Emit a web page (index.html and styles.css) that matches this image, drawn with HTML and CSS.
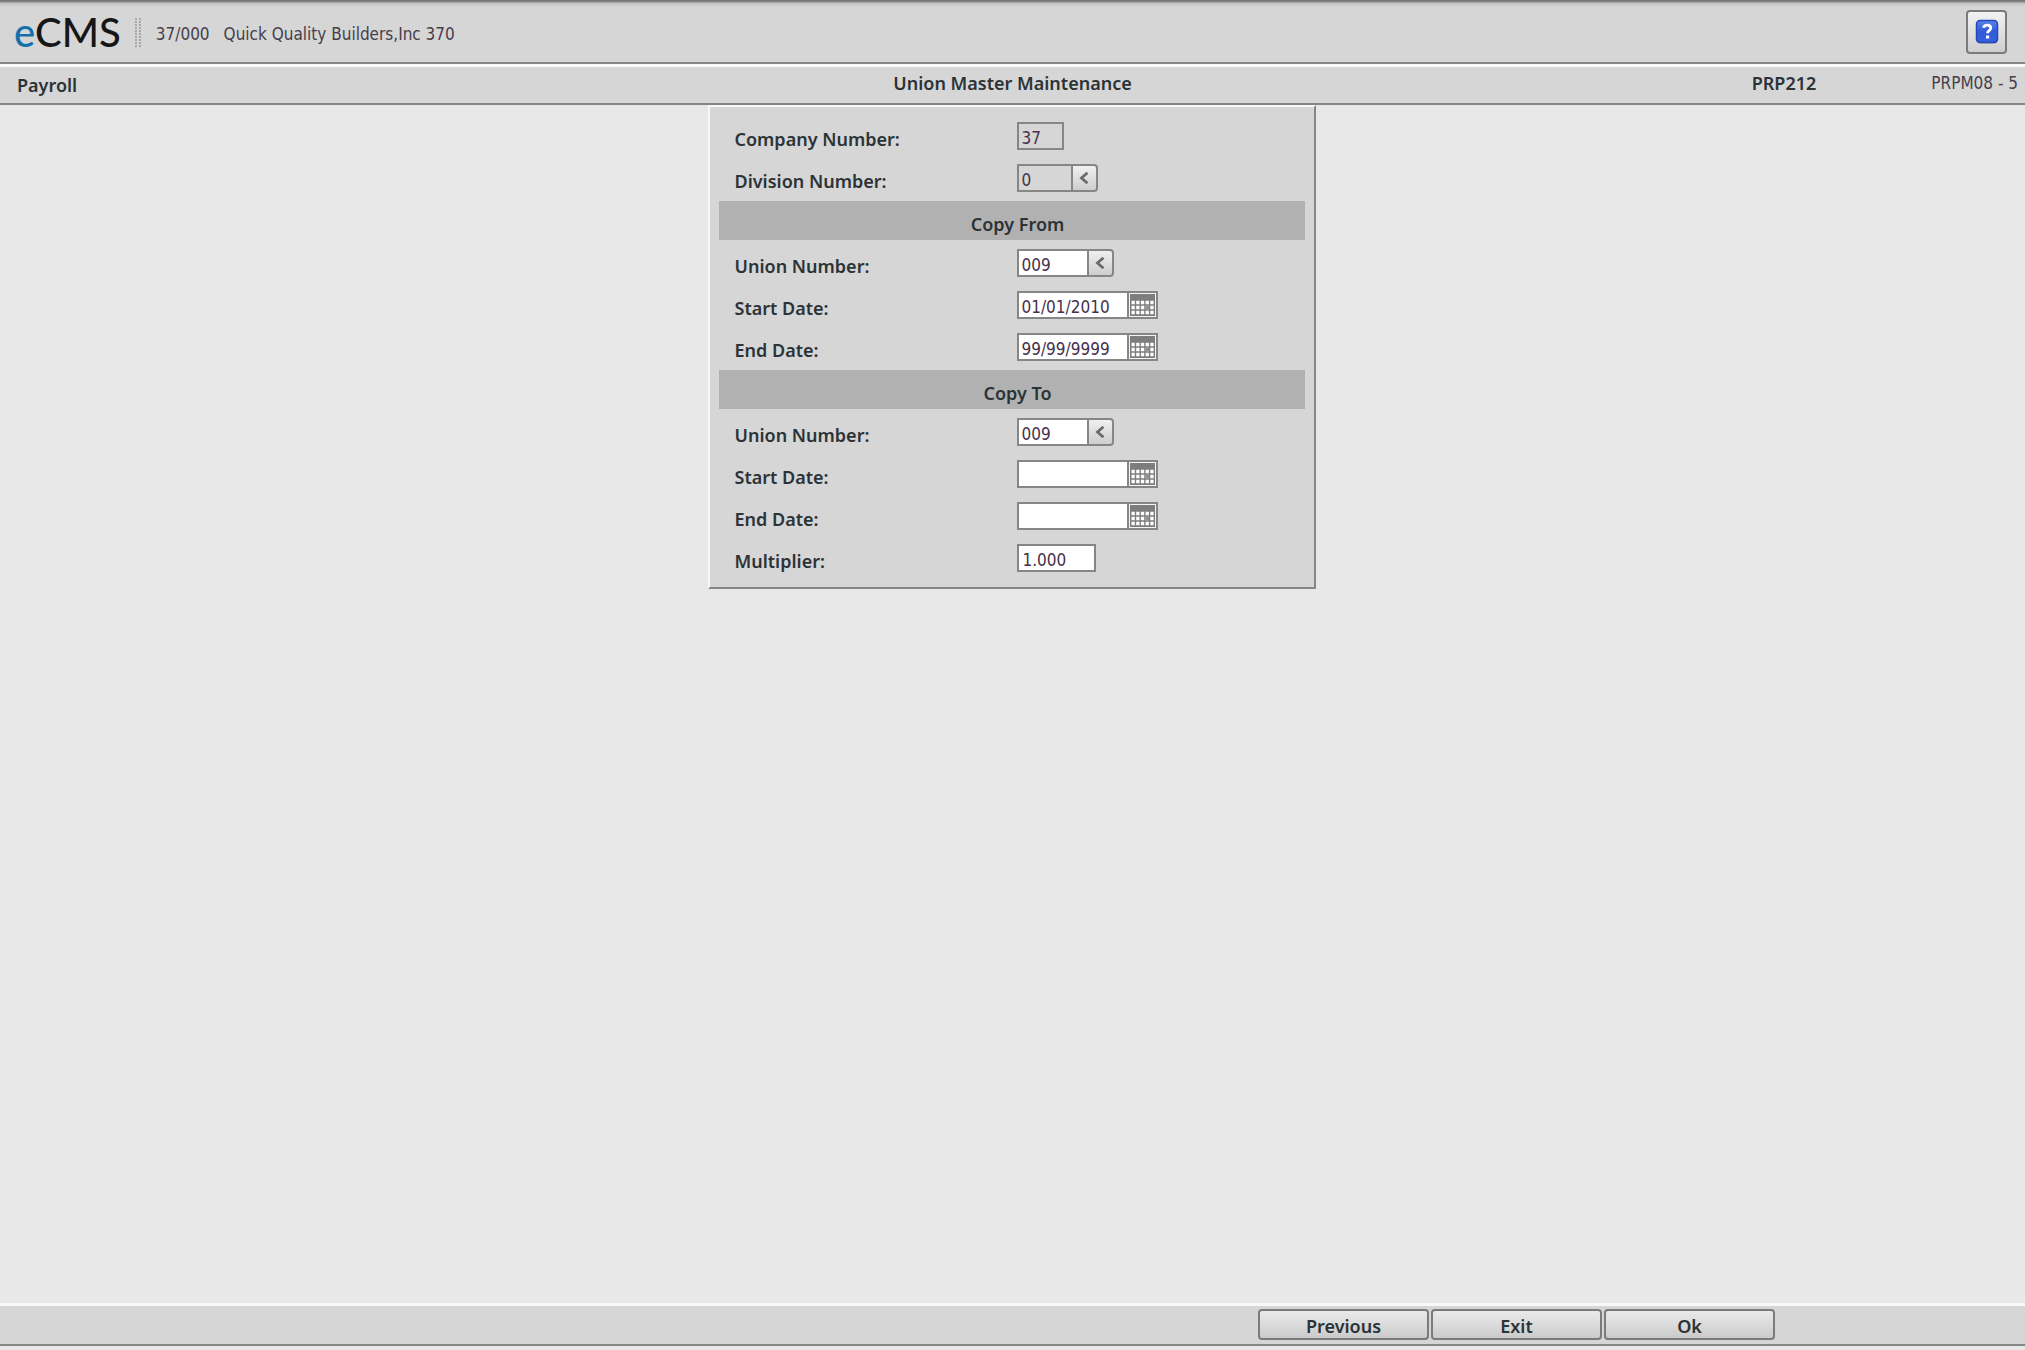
FILE: index.html
```html
<!DOCTYPE html>
<html lang="en">
<head>
<meta charset="utf-8">
<title>eCMS - Union Master Maintenance</title>
<link rel="stylesheet" href="styles.css">
</head>
<body>
<svg class="defs" aria-hidden="true">
  <symbol id="chevron" viewBox="0 0 10 12"><path d="M8.500 .8 2.500 6l6 5.200" fill="none" stroke="#6a6a6a" stroke-width="2.800"/></symbol>
  <symbol id="calendar" viewBox="0 0 25 22">
    <path d="M0 0h25v22H0z" fill="#7d7d7d"/>
    <path d="M1.500 8.500h22.500M1.500 13.500h22.500M1.500 18.500h22.500" stroke="#fff" stroke-width="3.400" stroke-dasharray="3.300 1.400"/>
    <path d="M15.600 11.800h3.300v3.400h-3.300z" fill="#8e8e8e"/>
  </symbol>
</svg>
<header class="topbar">
  <div class="logo"><span class="logo-e">e</span>CMS</div>
  <div class="grip"></div>
  <div class="company"><span>37/000</span><span>Quick Quality Builders,Inc 370</span></div>
  <button class="help" type="button" aria-label="Help">
    <svg width="24" height="26" viewBox="0 0 24 26">
      <defs><linearGradient id="blue" x1="0" y1="0" x2="0" y2="1"><stop offset="0" stop-color="#5b83ea"/><stop offset=".5" stop-color="#2f5bd6"/><stop offset="1" stop-color="#3462dc"/></linearGradient></defs>
      <rect x="2" y="3" width="21" height="22" rx="4" fill="#000" opacity=".15"/>
      <rect x="1.500" y="1.500" width="21" height="22" rx="3.500" fill="url(#blue)" stroke="#2547b8" stroke-width="1.500"/>
      <path d="M8.500 8.800c.4-1.700 1.800-2.600 3.700-2.600 2.200 0 3.600 1.100 3.600 2.900 0 2.500-3.300 2.500-3.300 5.200" fill="none" stroke="#fff" stroke-width="2.800"/>
      <path d="M11 16.500h3.200v3H11z" fill="#fff"/>
    </svg>
  </button>
</header>
<div class="titlebar">
  <div class="module">Payroll</div>
  <h1>Union Master Maintenance</h1>
  <div class="codes"><strong>PRP212</strong><span>PRPM08 - 5</span></div>
</div>
<main>
  <form class="panel" id="union">
    <div class="row"><label for="co">Company Number:</label><div class="field"><input class="w-co" id="co" value="37" readonly></div></div>
    <div class="row"><label for="div">Division Number:</label><div class="field"><input class="w-div" id="div" value="0" readonly><button class="pick" type="button" aria-label="Look up division"><svg width="10" height="12"><use href="#chevron"/></svg></button></div></div>
    <h2>Copy From</h2>
    <div class="row"><label for="fu">Union Number:</label><div class="field"><input class="w-union" id="fu" value="009"><button class="pick" type="button" aria-label="Look up union"><svg width="10" height="12"><use href="#chevron"/></svg></button></div></div>
    <div class="row"><label for="fs">Start Date:</label><div class="field"><input class="w-date" id="fs" value="01/01/2010"><button class="cal" type="button" aria-label="Choose date"><svg width="25" height="22"><use href="#calendar"/></svg></button></div></div>
    <div class="row"><label for="fe">End Date:</label><div class="field"><input class="w-date" id="fe" value="99/99/9999"><button class="cal" type="button" aria-label="Choose date"><svg width="25" height="22"><use href="#calendar"/></svg></button></div></div>
    <h2>Copy To</h2>
    <div class="row"><label for="tu">Union Number:</label><div class="field"><input class="w-union" id="tu" value="009"><button class="pick" type="button" aria-label="Look up union"><svg width="10" height="12"><use href="#chevron"/></svg></button></div></div>
    <div class="row"><label for="ts">Start Date:</label><div class="field"><input class="w-date" id="ts"><button class="cal" type="button" aria-label="Choose date"><svg width="25" height="22"><use href="#calendar"/></svg></button></div></div>
    <div class="row"><label for="te">End Date:</label><div class="field"><input class="w-date" id="te"><button class="cal" type="button" aria-label="Choose date"><svg width="25" height="22"><use href="#calendar"/></svg></button></div></div>
    <div class="row"><label for="mu">Multiplier:</label><div class="field"><input class="w-mult" id="mu" value="1.000"></div></div>
  </form>
</main>
<footer class="actions">
  <button type="button">Previous</button>
  <button type="button">Exit</button>
  <button type="submit" form="union">Ok</button>
</footer>
</body>
</html>
```

FILE: styles.css
```css
* { box-sizing: border-box; }

body {
  display: flex;
  flex-direction: column;
  min-height: 100vh;
  margin: 0;
  padding-bottom: 4px;
  background: #e8e8e8;
  color: #46404a;
  font: 17px/24px "DejaVu Sans Condensed", "DejaVu Sans", sans-serif;
}

button, input { margin: 0; font: inherit; }
button { padding: 0; cursor: pointer; }
.defs { display: none; }

h1, h2, label, .module, .codes strong, .actions button {
  margin: 0;
  color: #2b3337;
  font: 600 18px/24px "Noto Sans", sans-serif;
}

/* Top bar */
.topbar {
  display: flex;
  align-items: center;
  height: 64px;
  padding: 2px 18px 0 14px;
  border-bottom: 2px solid #868686;
  background: linear-gradient(#6e6e6e, #8a8a8a 2px, #c2c2c2 3px, #d6d6d6 7px);
}
.logo { color: #161616; font: 500 40px/48px Lato, sans-serif; }
.logo-e { color: #1270ab; }
.grip {
  width: 6px;
  height: 30px;
  margin: 0 15px 0 14px;
  background:
    repeating-linear-gradient(#d6d6d6 0 1px, transparent 1px 3px),
    repeating-linear-gradient(90deg, #a8a8a8 0 2px, #d6d6d6 2px 4px);
}
.company { display: flex; gap: 14px; padding-top: 4px; }
.help {
  display: grid;
  place-items: center;
  width: 41px;
  height: 44px;
  margin-left: auto;
  border: 2px solid #7b7b7b;
  border-radius: 4px;
  background: linear-gradient(#f2f2f2, #cfcfcf);
}

/* Title bar */
.titlebar {
  display: grid;
  grid-template-columns: 1fr auto 1fr;
  align-items: center;
  height: 41px;
  padding: 0 7px;
  border-top: 3px solid #f8f8f8;
  border-bottom: 2px solid #868686;
  background: #d6d6d6;
}
.module { padding-left: 10px; }
.titlebar h1, .codes { padding-bottom: 4px; }
.codes { display: flex; justify-content: flex-end; gap: 115px; }

/* Form */
main { display: flex; flex: 1; align-items: flex-start; justify-content: center; padding-right: 2px; }
.panel {
  width: 608px;
  padding: 8px 9px;
  border: 2px solid #868686;
  border-top-color: #f8f8f8;
  border-left-color: #f8f8f8;
  background: #d6d6d6;
}
.row { display: grid; grid-template-columns: 282px 1fr; align-items: center; height: 42px; padding-left: 16px; }
.row label { padding-top: 6px; }
.panel h2 {
  height: 39px;
  margin: 2px 0;
  padding: 11px 0 0 12px;
  background: #b1b1b1;
  text-align: center;
}
.field { display: flex; }
.field input {
  height: 28px;
  padding: 3px 2px 0 3px;
  border: 2px solid #868686;
  border-radius: 0;
  background: #fff;
  color: #46304c;
}
.field input:read-only { background: #d6d6d6; }
.field .w-co { width: 47px; }
.field .w-div { width: 56px; }
.field .w-union { width: 72px; }
.field .w-date { width: 112px; }
.field .w-mult { width: 79px; padding-left: 4px; }
.pick, .cal {
  display: grid;
  place-items: center;
  height: 28px;
  border: 2px solid #868686;
  border-left: 0;
}
.pick { width: 25px; border-radius: 0 4px 4px 0; background: linear-gradient(#f0f0f0, #cecece); }
.cal { width: 29px; background: #f4f4f4; }

/* Footer */
.actions {
  display: flex;
  justify-content: flex-end;
  align-items: center;
  gap: 2px;
  height: 43px;
  padding: 0 250px 1px 0;
  border-top: 3px solid #f8f8f8;
  border-bottom: 2px solid #868686;
  background: #d6d6d6;
}
.actions button {
  width: 171px;
  height: 31px;
  padding-top: 2px;
  border: 2px solid #7b7b7b;
  border-radius: 4px;
  background: linear-gradient(#eaeaea, #cbcbcb);
}
```
